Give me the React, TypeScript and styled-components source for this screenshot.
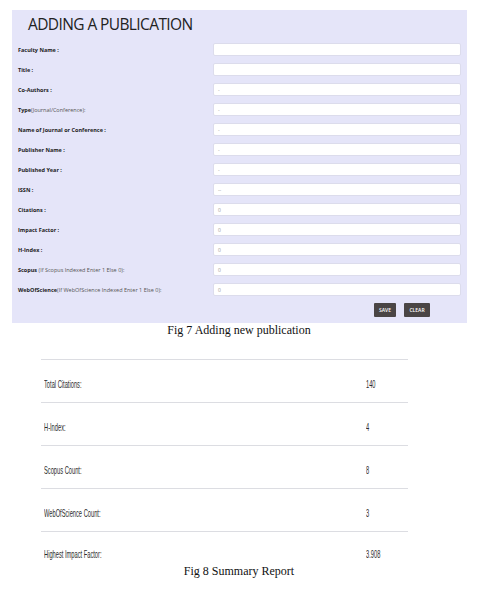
import React from 'react';
import styled, { createGlobalStyle } from 'styled-components';

const GlobalStyle = createGlobalStyle`
  body {
    margin: 0;
    background: #fff;
    font-family: 'Open Sans', sans-serif;
  }
`;

const Page = styled.div`
  width: 478px;
  padding-top: 10px;
`;

const Panel = styled.div`
  margin-left: 12px;
  width: 455px;
  height: 313px;
  box-sizing: border-box;
  background-color: #e5e5f9;
  padding: 4px 6px 6px 6px;
`;

const Title = styled.h1`
  margin: 0 0 0 10px;
  height: 29px;
  font-family: 'Open Sans', sans-serif;
  font-weight: 500;
  font-size: 15.5px;
  line-height: 20px;
  letter-spacing: -0.6px;
  color: #222;
`;

const Form = styled.div`
  display: grid;
  grid-template-columns: 195px 248px;
  row-gap: 7px;
`;

const Label = styled.div`
  height: 13px;
  line-height: 15px;
  white-space: pre;
  font-size: 5.5px;
  font-weight: 700;
  color: #222;
`;

const Hint = styled.span`
  font-weight: 400;
  color: #555;
`;

const Input = styled.div`
  height: 13px;
  box-sizing: border-box;
  background: #fff;
  border: 1px solid #dcdcec;
  border-radius: 2px;
  padding-left: 4px;
  display: flex;
  align-items: center;
  font-size: 5px;
  color: #999;
`;

const Actions = styled.div`
  display: flex;
  justify-content: flex-end;
  gap: 8px;
  margin-top: 7px;
  padding-right: 31px;
`;

const Button = styled.button<{ $w: number }>`
  width: ${p => p.$w}px;
  height: 14px;
  padding: 0;
  border: none;
  border-radius: 1px;
  background: #4a4545;
  color: #fff;
  font-family: 'Open Sans', sans-serif;
  font-size: 5px;
  font-weight: 600;
`;

const Caption = styled.div`
  text-align: center;
  font-family: 'Liberation Serif', serif;
  font-size: 12px;
  line-height: 14px;
  color: #111;
`;

const Summary = styled.div`
  margin: 22px 0 0 41px;
  width: 367px;
`;

const SummaryRow = styled.div`
  height: 43px;
  border-top: 1px solid #dcdde2;
  display: flex;
  align-items: center;
  padding-top: 2px;
  box-sizing: border-box;

  &:last-child {
    height: 33px;
    padding-top: 8px;
  }
`;

const Cell = styled.div<{ $w: number }>`
  width: ${p => p.$w}px;
  flex-shrink: 0;
  overflow: visible;
  white-space: nowrap;
`;

const Narrow = styled.span`
  display: inline-block;
  transform: scaleX(0.52);
  transform-origin: left center;
  font-family: 'Liberation Sans', sans-serif;
  font-size: 11px;
  color: #2a2a2a;
`;

const fields: { label: string; hint?: string; value: string }[] = [
  { label: 'Faculty Name :', value: '' },
  { label: 'Title :', value: '' },
  { label: 'Co-Authors :', value: '-' },
  { label: 'Type', hint: '(Journal/Conference):', value: '-' },
  { label: 'Name of Journal or Conference :', value: '-' },
  { label: 'Publisher Name :', value: '-' },
  { label: 'Published Year :', value: '-' },
  { label: 'ISSN :', value: '--' },
  { label: 'Citations :', value: '0' },
  { label: 'Impact Factor :', value: '0' },
  { label: 'H-Index :', value: '0' },
  { label: 'Scopus', hint: ' (If Scopus Indexed Enter 1 Else 0):', value: '0' },
  { label: 'WebOfScience', hint: '(If WebOfScience Indexed Enter 1 Else 0):', value: '0' },
];

const summary = [
  { label: 'Total Citations:', value: '140' },
  { label: 'H-Index:', value: '4' },
  { label: 'Scopus Count:', value: '8' },
  { label: 'WebOfScience Count:', value: '3' },
  { label: 'Highest Impact Factor:', value: '3.908' },
];

const App: React.FC = () => {
  return (
    <Page>
      <GlobalStyle />
      <Panel>
        <Title>ADDING A PUBLICATION</Title>
        <Form>
          {fields.map((f, i) => (
            <React.Fragment key={i}>
              <Label>
                {f.label}
                {f.hint && <Hint>{f.hint}</Hint>}
              </Label>
              <Input>{f.value}</Input>
            </React.Fragment>
          ))}
        </Form>
        <Actions>
          <Button $w={22}>SAVE</Button>
          <Button $w={26}>CLEAR</Button>
        </Actions>
      </Panel>
      <Caption>Fig 7 Adding new publication</Caption>

      <Summary>
        {summary.map((s, i) => (
          <SummaryRow key={i}>
            <Cell $w={325}>
              <Narrow style={{ marginLeft: 3 }}>{s.label}</Narrow>
            </Cell>
            <Cell $w={40}>
              <Narrow>{s.value}</Narrow>
            </Cell>
          </SummaryRow>
        ))}
      </Summary>
      <Caption>Fig 8 Summary Report</Caption>
    </Page>
  );
};

export default App;
